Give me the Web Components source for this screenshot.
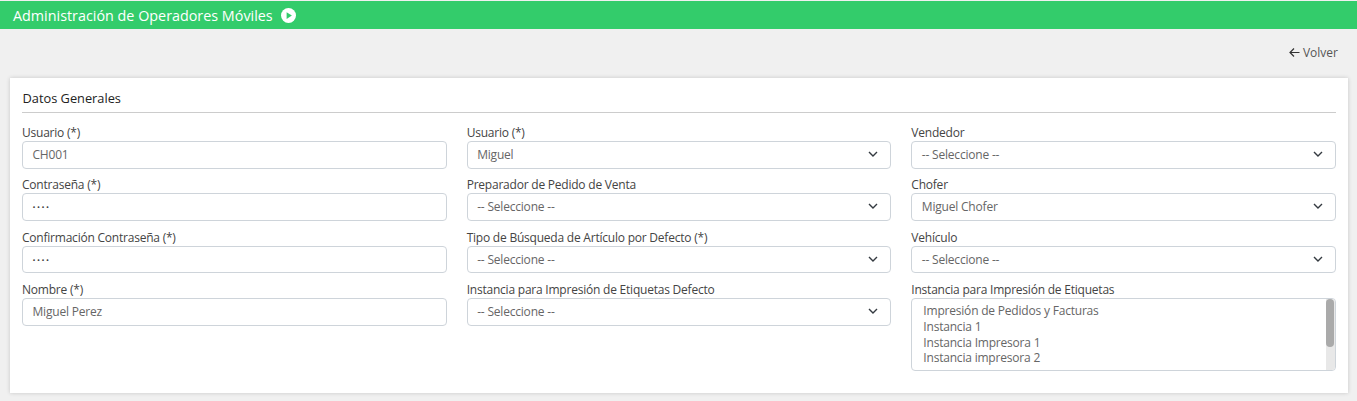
<!DOCTYPE html>
<html lang="es">
<head>
<meta charset="utf-8">
<title>Administración de Operadores Móviles</title>
<style>
    html, body { margin: 0; padding: 0; background: #f0f0f0; height: 401px; overflow: hidden; }
    body { font-family: "Open Sans", sans-serif; font-size: 12px; color: #555; }
</style>
</head>
<body>
<app-page>
    <page-header slot="header" title="Administración de Operadores Móviles"></page-header>
    <back-link slot="actions" label="Volver"></back-link>
    <form-card title="Datos Generales">
        <form-field label="Usuario (*)"><text-box value="CH001"></text-box></form-field>
        <form-field label="Usuario (*)"><select-box value="Miguel"></select-box></form-field>
        <form-field label="Vendedor"><select-box value="-- Seleccione --"></select-box></form-field>

        <form-field label="Contraseña (*)"><text-box value="••••" secret></text-box></form-field>
        <form-field label="Preparador de Pedido de Venta"><select-box value="-- Seleccione --"></select-box></form-field>
        <form-field label="Chofer"><select-box value="Miguel Chofer"></select-box></form-field>

        <form-field label="Confirmación Contraseña (*)"><text-box value="••••" secret></text-box></form-field>
        <form-field label="Tipo de Búsqueda de Artículo por Defecto (*)"><select-box value="-- Seleccione --"></select-box></form-field>
        <form-field label="Vehículo"><select-box value="-- Seleccione --"></select-box></form-field>

        <form-field label="Nombre (*)"><text-box value="Miguel Perez"></text-box></form-field>
        <form-field label="Instancia para Impresión de Etiquetas Defecto"><select-box value="-- Seleccione --"></select-box></form-field>
        <form-field label="Instancia para Impresión de Etiquetas">
            <list-box>
                <div>Impresión de Pedidos y Facturas</div>
                <div>Instancia 1</div>
                <div>Instancia Impresora 1</div>
                <div>Instancia impresora 2</div>
            </list-box>
        </form-field>
    </form-card>
</app-page>

<script>
class AppPage extends HTMLElement {
    constructor() {
        super();
        this.attachShadow({ mode: 'open' });
        this.shadowRoot.innerHTML = `<style>
            :host { display: block; padding-top: 1px; }
            .actions { display: flex; justify-content: flex-end; padding: 15px 19px 0 0; height: 34px; }
            .body { padding: 0 9px 0 10px; }
        </style>
        <slot name="header"></slot>
        <div class="actions"><slot name="actions"></slot></div>
        <div class="body"><slot></slot></div>`;
    }
}

class PageHeader extends HTMLElement {
    constructor() {
        super();
        this.attachShadow({ mode: 'open' });
    }
    connectedCallback() {
        this.shadowRoot.innerHTML = `<style>
            :host { display: flex; align-items: center; gap: 8px; height: 28px; padding-left: 13px; background: #33cc6b; color: #fff; font-size: 14.35px; }
            svg { width: 15px; height: 15px; display: block; }
        </style>
        <span>${this.getAttribute('title')}</span>
        <svg viewBox="0 0 16 16"><circle cx="8" cy="8" r="8" fill="#fff"/><path d="M6 4.4 11.6 8 6 11.6z" fill="#33cc6b"/></svg>`;
    }
}

class BackLink extends HTMLElement {
    constructor() {
        super();
        this.attachShadow({ mode: 'open' });
    }
    connectedCallback() {
        this.shadowRoot.innerHTML = `<style>
            :host { display: flex; align-items: center; gap: 3px; height: 16px; color: #555; font-size: 12px; }
            svg { width: 11px; height: 11px; display: block; }
        </style>
        <svg viewBox="0 0 11 11" fill="none" stroke="#333" stroke-width="1.2"><path d="M10.5 5.5H1M5 1.5l-4 4 4 4"/></svg>
        <span>${this.getAttribute('label')}</span>`;
    }
}

class FormCard extends HTMLElement {
    constructor() {
        super();
        this.attachShadow({ mode: 'open' });
    }
    connectedCallback() {
        this.shadowRoot.innerHTML = `<style>
            :host { display: block; box-sizing: border-box; height: 315px; padding: 12px 12px 0 12px; background: #fff; box-shadow: 0 0 4px rgba(0,0,0,.18); }
            h2 { margin: 0; height: 22px; line-height: 17px; padding-left: 0.5px; font-size: 12.8px; font-weight: 500; color: #222; border-bottom: 1px solid #ccc; }
            .grid { display: grid; grid-template-columns: repeat(3, 1fr); column-gap: 20px; row-gap: 0; padding-top: 10px; }
        </style>
        <h2>${this.getAttribute('title')}</h2>
        <div class="grid"><slot></slot></div>`;
    }
}

class FormField extends HTMLElement {
    constructor() {
        super();
        this.attachShadow({ mode: 'open' });
    }
    connectedCallback() {
        this.shadowRoot.innerHTML = `<style>
            :host { display: block; height: 52.4px; }
            label { display: block; height: 18px; line-height: 20.4px; font-size: 12px; letter-spacing: -0.22px; font-weight: 500; color: #444; }
        </style>
        <label>${this.getAttribute('label')}</label>
        <slot></slot>`;
    }
}

const boxStyle = `
    :host { display: flex; align-items: center; box-sizing: border-box; height: 27.5px; padding: 0 9.5px 0.5px; border: 1px solid #ced4da; border-radius: 4px; background: #fff; color: #666; font-size: 12px; letter-spacing: -0.2px; }
`;

class TextBox extends HTMLElement {
    constructor() {
        super();
        this.attachShadow({ mode: 'open' });
    }
    connectedCallback() {
        const secret = this.hasAttribute('secret');
        this.shadowRoot.innerHTML = `<style>${boxStyle}
            .secret { font-size: 8px; letter-spacing: 1.5px; color: #444; }
        </style>
        <span class="${secret ? 'secret' : ''}">${this.getAttribute('value')}</span>`;
    }
}

class SelectBox extends HTMLElement {
    constructor() {
        super();
        this.attachShadow({ mode: 'open' });
    }
    connectedCallback() {
        this.shadowRoot.innerHTML = `<style>${boxStyle}
            :host { justify-content: space-between; padding-right: 12px; }
            svg { width: 10px; height: 7px; display: block; }
        </style>
        <span>${this.getAttribute('value')}</span>
        <svg viewBox="0 0 10 7" fill="none" stroke="#343a40" stroke-width="1.4"><path d="M1 1l4 4 4-4"/></svg>`;
    }
}

class ListBox extends HTMLElement {
    constructor() {
        super();
        this.attachShadow({ mode: 'open' });
        this.shadowRoot.innerHTML = `<style>
            :host { display: block; position: relative; box-sizing: border-box; height: 73px; padding: 4px 12px 0 11px; border: 1px solid #ced4da; border-radius: 4px; background: #fff; color: #666; font-size: 12px; letter-spacing: -0.2px; line-height: 15.7px; overflow: hidden; }
            .track { position: absolute; top: 0; right: 0; bottom: 0; width: 9px; background: #e8e8e8; }
            .thumb { height: 48px; width: 8px; border-radius: 4px; background: #aaa; }
        </style>
        <slot></slot>
        <div class="track"><div class="thumb"></div></div>`;
    }
}

customElements.define('app-page', AppPage);
customElements.define('page-header', PageHeader);
customElements.define('back-link', BackLink);
customElements.define('form-card', FormCard);
customElements.define('form-field', FormField);
customElements.define('text-box', TextBox);
customElements.define('select-box', SelectBox);
customElements.define('list-box', ListBox);
</script>
</body>
</html>
